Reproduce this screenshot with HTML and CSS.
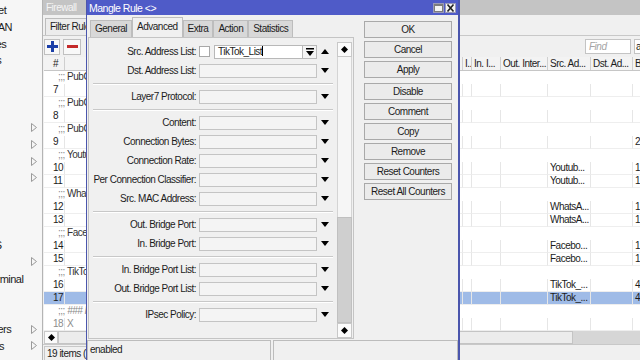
FILE: index.html
```html
<!doctype html>

<html>
    <head>
        <meta charset="utf-8">

        <title>Mangle Rule</title>

        <link rel="stylesheet" href="styles.css">

    </head>

    <body>

        <div id="ekran">

            <div id="menu">
                <div class="mi"><span class="mi-ad">Quick Set</span></div>
                <div class="mi"><span class="mi-ad">CAPsMAN</span></div>
                <div class="mi"><span class="mi-ad">Interfaces</span></div>
                <div class="mi"><span class="mi-ad">Wireless</span></div>
                <div class="mi"><span class="mi-ad">Bridge</span></div>
                <div class="mi"><span class="mi-ad">PPP</span></div>
                <div class="mi"><span class="mi-ad">Mesh</span></div>
                <div class="mi"><span class="mi-ad">IP</span><svg class="mi-ok" viewBox="0 0 6 9"><polygon points="0.5,0.5 5.5,4.5 0.5,8.5"/></svg></div>
                <div class="mi"><span class="mi-ad">MPLS</span><svg class="mi-ok" viewBox="0 0 6 9"><polygon points="0.5,0.5 5.5,4.5 0.5,8.5"/></svg></div>
                <div class="mi"><span class="mi-ad">Routing</span><svg class="mi-ok" viewBox="0 0 6 9"><polygon points="0.5,0.5 5.5,4.5 0.5,8.5"/></svg></div>
                <div class="mi"><span class="mi-ad">System</span><svg class="mi-ok" viewBox="0 0 6 9"><polygon points="0.5,0.5 5.5,4.5 0.5,8.5"/></svg></div>
                <div class="mi"><span class="mi-ad">Queues</span></div>
                <div class="mi"><span class="mi-ad">Files</span></div>
                <div class="mi"><span class="mi-ad">Log</span></div>
                <div class="mi"><span class="mi-ad">RADIUS</span></div>
                <div class="mi"><span class="mi-ad">Tools</span><svg class="mi-ok" viewBox="0 0 6 9"><polygon points="0.5,0.5 5.5,4.5 0.5,8.5"/></svg></div>
                <div class="mi"><span class="mi-ad">New Terminal</span></div>
                <div class="mi"><span class="mi-ad">Dot1X</span></div>
                <div class="mi"><span class="mi-ad">KVM</span></div>
                <div class="mi"><span class="mi-ad">Containers</span><svg class="mi-ok" viewBox="0 0 6 9"><polygon points="0.5,0.5 5.5,4.5 0.5,8.5"/></svg></div>
                <div class="mi"><span class="mi-ad">Windows</span><svg class="mi-ok" viewBox="0 0 6 9"><polygon points="0.5,0.5 5.5,4.5 0.5,8.5"/></svg></div>
            </div>

            <div id="firewall">
                <div class="fw-baslik">Firewall</div>
                <div class="fw-sekmeler">
                    <div class="fw-sekme">Filter Rules</div>
                </div>
                <div class="fw-arac">
                    <div class="arac-bt">
                        <svg width="11" height="11" viewBox="0 0 11 11"><rect x="4" y="0" width="3" height="11" fill="#1b3fa8"/><rect x="0" y="4" width="11" height="3" fill="#1b3fa8"/></svg>
                    </div>
                    <div class="arac-bt">
                        <svg width="11" height="11" viewBox="0 0 11 11"><rect x="0" y="4" width="11" height="3" fill="#c42a2a"/></svg>
                    </div>
                    <div class="find">Find</div>
                    <div class="secim">all</div>
                </div>

                <div class="tablo">
                    <div class="satir baslik">
                        <span class="c-no">#</span><span class="c-gz"></span><span class="c-i">I...</span><span class="c-in">In. I...</span><span class="c-out">Out. Inter...</span><span class="c-src">Src. Ad...</span><span class="c-dst">Dst. Ad...</span><span class="c-b">Bytes</span>
                    </div>
                    <div class="satir yorum"><span><i>;;;</i> PubG</span></div>
                    <div class="satir veri"><span class="c-no">7</span><span class="c-gz"></span><span class="c-i"></span><span class="c-in"></span><span class="c-out"></span><span class="c-src"></span><span class="c-dst"></span><span class="c-b"></span></div>
                    <div class="satir yorum"><span><i>;;;</i> PubG</span></div>
                    <div class="satir veri"><span class="c-no">8</span><span class="c-gz"></span><span class="c-i"></span><span class="c-in"></span><span class="c-out"></span><span class="c-src"></span><span class="c-dst"></span><span class="c-b"></span></div>
                    <div class="satir yorum"><span><i>;;;</i> PubG</span></div>
                    <div class="satir veri"><span class="c-no">9</span><span class="c-gz"></span><span class="c-i"></span><span class="c-in"></span><span class="c-out"></span><span class="c-src"></span><span class="c-dst"></span><span class="c-b">2</span></div>
                    <div class="satir yorum"><span><i>;;;</i> Youtube</span></div>
                    <div class="satir veri"><span class="c-no">10</span><span class="c-gz"></span><span class="c-i"></span><span class="c-in"></span><span class="c-out"></span><span class="c-src">Youtub...</span><span class="c-dst"></span><span class="c-b">1</span></div>
                    <div class="satir veri"><span class="c-no">11</span><span class="c-gz"></span><span class="c-i"></span><span class="c-in"></span><span class="c-out"></span><span class="c-src">Youtub...</span><span class="c-dst"></span><span class="c-b">1</span></div>
                    <div class="satir yorum"><span><i>;;;</i> WhatsApp</span></div>
                    <div class="satir veri"><span class="c-no">12</span><span class="c-gz"></span><span class="c-i"></span><span class="c-in"></span><span class="c-out"></span><span class="c-src">WhatsA...</span><span class="c-dst"></span><span class="c-b">1</span></div>
                    <div class="satir veri"><span class="c-no">13</span><span class="c-gz"></span><span class="c-i"></span><span class="c-in"></span><span class="c-out"></span><span class="c-src">WhatsA...</span><span class="c-dst"></span><span class="c-b">1</span></div>
                    <div class="satir yorum"><span><i>;;;</i> Facebook</span></div>
                    <div class="satir veri"><span class="c-no">14</span><span class="c-gz"></span><span class="c-i"></span><span class="c-in"></span><span class="c-out"></span><span class="c-src">Facebo...</span><span class="c-dst"></span><span class="c-b">1</span></div>
                    <div class="satir veri"><span class="c-no">15</span><span class="c-gz"></span><span class="c-i"></span><span class="c-in"></span><span class="c-out"></span><span class="c-src">Facebo...</span><span class="c-dst"></span><span class="c-b">1</span></div>
                    <div class="satir yorum"><span><i>;;;</i> TikTok</span></div>
                    <div class="satir veri"><span class="c-no">16</span><span class="c-gz"></span><span class="c-i"></span><span class="c-in"></span><span class="c-out"></span><span class="c-src">TikTok_...</span><span class="c-dst"></span><span class="c-b">4</span></div>
                    <div class="satir veri secili"><span class="c-no">17</span><span class="c-gz"></span><span class="c-i"></span><span class="c-in"></span><span class="c-out"></span><span class="c-src">TikTok_...</span><span class="c-dst"></span><span class="c-b">4</span></div>
                    <div class="satir yorum"><span><i>;;;</i> <em>### IPsec</em></span></div>
                    <div class="satir veri pasif"><span class="c-no">18</span><span class="c-gz">X</span><span class="c-i"></span><span class="c-in"></span><span class="c-out"></span><span class="c-src"></span><span class="c-dst"></span><span class="c-b"></span></div>
                </div>

                <div class="yatay">
                    <div class="ok-bt">
                        <svg width="7" height="7" viewBox="0 0 7 7"><polygon points="0,3.5 3.5,0 7,3.5 3.5,7"/></svg>
                    </div>
                    <div class="kaydirac"></div>
                </div>
                <div class="fw-durum">
                    <div class="durum-alan">19 items (1 selected)</div>
                </div>
            </div>

            <div id="pencere">
                <div class="p-baslik">
                    <span class="p-ad">Mangle Rule &lt;&gt;</span>
                    <div class="p-bt"><svg width="9" height="8" viewBox="0 0 9 8"><rect x="0.5" y="0.5" width="8" height="7" fill="none" stroke="#7c7c7c"/><rect x="0.5" y="0.5" width="8" height="1.5" fill="#7c7c7c"/></svg></div>
                    <div class="p-bt"><svg width="9" height="8" viewBox="0 0 9 8"><path d="M1.5 0.5 L7.5 7.5 M7.5 0.5 L1.5 7.5" stroke="#222" stroke-width="1.6"/></svg></div>
                </div>

                <div class="p-govde">
                    <div class="p-sol">
                        <div class="sekmeler">
                            <div class="sekme">General</div>
                            <div class="sekme aktif">Advanced</div>
                            <div class="sekme">Extra</div>
                            <div class="sekme">Action</div>
                            <div class="sekme">Statistics</div>
                        </div>

                        <div class="panel">
                            <div class="form">
                                <div class="f-satir">
                                    <label>Src. Address List:</label>
                                    <div class="kutu"></div>
                                    <div class="girdi dolu">TikTok_List<span class="imlec"></span></div>
                                    <div class="acilir-bt"><svg width="8" height="8" viewBox="0 0 8 8"><rect x="0" y="0" width="8" height="1.5"/><polygon points="0,3 8,3 4,8"/></svg></div>
                                    <svg class="ok" viewBox="0 0 8 5"><polygon points="0,5 8,5 4,0"/></svg>
                                </div>
                                <div class="f-satir">
                                    <label>Dst. Address List:</label>
                                    <div class="girdi"></div>
                                    <svg class="ok" viewBox="0 0 8 5"><polygon points="0,0 8,0 4,5"/></svg>
                                </div>
                                <div class="ayirac"></div>
                                <div class="f-satir">
                                    <label>Layer7 Protocol:</label>
                                    <div class="girdi"></div>
                                    <svg class="ok" viewBox="0 0 8 5"><polygon points="0,0 8,0 4,5"/></svg>
                                </div>
                                <div class="ayirac"></div>
                                <div class="f-satir">
                                    <label>Content:</label>
                                    <div class="girdi"></div>
                                    <svg class="ok" viewBox="0 0 8 5"><polygon points="0,0 8,0 4,5"/></svg>
                                </div>
                                <div class="f-satir">
                                    <label>Connection Bytes:</label>
                                    <div class="girdi"></div>
                                    <svg class="ok" viewBox="0 0 8 5"><polygon points="0,0 8,0 4,5"/></svg>
                                </div>
                                <div class="f-satir">
                                    <label>Connection Rate:</label>
                                    <div class="girdi"></div>
                                    <svg class="ok" viewBox="0 0 8 5"><polygon points="0,0 8,0 4,5"/></svg>
                                </div>
                                <div class="f-satir">
                                    <label>Per Connection Classifier:</label>
                                    <div class="girdi"></div>
                                    <svg class="ok" viewBox="0 0 8 5"><polygon points="0,0 8,0 4,5"/></svg>
                                </div>
                                <div class="f-satir">
                                    <label>Src. MAC Address:</label>
                                    <div class="girdi"></div>
                                    <svg class="ok" viewBox="0 0 8 5"><polygon points="0,0 8,0 4,5"/></svg>
                                </div>
                                <div class="ayirac"></div>
                                <div class="f-satir">
                                    <label>Out. Bridge Port:</label>
                                    <div class="girdi"></div>
                                    <svg class="ok" viewBox="0 0 8 5"><polygon points="0,0 8,0 4,5"/></svg>
                                </div>
                                <div class="f-satir">
                                    <label>In. Bridge Port:</label>
                                    <div class="girdi"></div>
                                    <svg class="ok" viewBox="0 0 8 5"><polygon points="0,0 8,0 4,5"/></svg>
                                </div>
                                <div class="ayirac"></div>
                                <div class="f-satir">
                                    <label>In. Bridge Port List:</label>
                                    <div class="girdi"></div>
                                    <svg class="ok" viewBox="0 0 8 5"><polygon points="0,0 8,0 4,5"/></svg>
                                </div>
                                <div class="f-satir">
                                    <label>Out. Bridge Port List:</label>
                                    <div class="girdi"></div>
                                    <svg class="ok" viewBox="0 0 8 5"><polygon points="0,0 8,0 4,5"/></svg>
                                </div>
                                <div class="ayirac"></div>
                                <div class="f-satir">
                                    <label>IPsec Policy:</label>
                                    <div class="girdi"></div>
                                    <svg class="ok" viewBox="0 0 8 5"><polygon points="0,0 8,0 4,5"/></svg>
                                </div>
                            </div>

                            <div class="dikey">
                                <div class="d-bt">
                                    <svg width="7" height="7" viewBox="0 0 7 7"><polygon points="3.5,0 7,3.5 3.5,7 0,3.5"/></svg>
                                </div>
                                <div class="d-iz"></div>
                                <div class="d-tutamac"></div>
                                <div class="d-bt">
                                    <svg width="7" height="7" viewBox="0 0 7 7"><polygon points="3.5,0 7,3.5 3.5,7 0,3.5"/></svg>
                                </div>
                            </div>
                        </div>
                    </div>

                    <div class="p-sag">
                        <button class="dugme">OK</button>
                        <button class="dugme">Cancel</button>
                        <button class="dugme ara">Apply</button>
                        <button class="dugme">Disable</button>
                        <button class="dugme">Comment</button>
                        <button class="dugme">Copy</button>
                        <button class="dugme">Remove</button>
                        <button class="dugme">Reset Counters</button>
                        <button class="dugme">Reset All Counters</button>
                    </div>
                </div>

                <div class="p-durum">
                    <div class="p-alan uzun">enabled</div>
                    <div class="p-alan"></div>
                </div>
            </div>

        </div>

    </body>
</html>
```

FILE: styles.css
```css
*{
    margin: 0px;
    padding: 0px;
    box-sizing: border-box;
}
body{
    width: 640px;
    height: 360px;
    overflow: hidden;
    font-family: "Liberation Sans", Arial, sans-serif;
    font-size: 10px;
    letter-spacing: -0.5px;
    color: #1c1c1c;
    background-color: #f0f0f0;
}
#ekran{
    position: relative;
    display: flex;
    width: 640px;
    height: 360px;
    overflow: hidden;
}

/* sol menu */
#menu{
    width: 43px;
    flex-shrink: 0;
    padding-top: 1.6px;
    overflow: hidden;
    font-size: 11px;
    background-color: #f6f6f6;
    border-right: 1px solid #b4b4b4;
}
.mi{
    display: flex;
    align-items: center;
    height: 16.8px;
}
.mi-ad{
    flex: 1;
    margin-left: -37px;
    white-space: nowrap;
    overflow: hidden;
}
.mi-ok{
    width: 6px;
    height: 9px;
    margin-right: 5px;
    fill: none;
    stroke: #9a9a9a;
}

/* firewall penceresi */
#firewall{
    width: 597px;
    flex-shrink: 0;
    display: flex;
    flex-direction: column;
    overflow: hidden;
    background-color: #f0f0f0;
}
.fw-baslik{
    height: 15px;
    line-height: 15px;
    padding-left: 3px;
    color: #f4f4f4;
    background-color: #c4c4c4;
}
.fw-sekmeler{
    height: 21px;
    display: flex;
    align-items: flex-end;
    padding-left: 2px;
    border-bottom: 1px solid #c8c8c8;
}
.fw-sekme{
    height: 17px;
    line-height: 16px;
    padding: 0px 4px;
    white-space: nowrap;
    border: 1px solid #bcbcbc;
    border-bottom: none;
    background-color: #ececec;
}
.fw-arac{
    height: 21px;
    display: flex;
    align-items: center;
    padding-left: 1px;
}
.arac-bt{
    width: 16px;
    height: 16px;
    margin-right: 3px;
    display: flex;
    justify-content: center;
    align-items: center;
    border: 1px solid #c0c0c0;
    background-color: #f8f8f8;
}
.arac-bt + .arac-bt{
    width: 18px;
}
.find{
    width: 46px;
    height: 15px;
    margin-left: auto;
    padding-left: 3px;
    line-height: 13px;
    font-style: italic;
    color: #a4a4a4;
    background-color: #ffffff;
    border: 1px solid #c4c4c4;
}
.secim{
    width: 6px;
    height: 15px;
    margin-left: 3px;
    padding-left: 1px;
    line-height: 13px;
    overflow: hidden;
    background-color: #ffffff;
    border: 1px solid #c4c4c4;
    border-right: none;
}

/* tablo */
.tablo{
    height: 274px;
    margin-left: 1px;
    overflow: hidden;
    background-color: #ffffff;
}
.satir{
    display: flex;
    height: 13px;
    line-height: 12px;
    white-space: nowrap;
}
.satir span{
    flex-shrink: 0;
    overflow: hidden;
    padding-left: 2px;
}
.baslik{
    height: 14px;
    line-height: 13px;
    background-color: #f3f3f3;
    border-bottom: 1px solid #c6c6c6;
}
.baslik span{
    border-right: 1px solid #cfcfcf;
}
.veri span{
    border-right: 1px solid #e6e6e6;
    border-bottom: 1px solid #eeeeee;
}
.c-no{ width: 21px; }
.satir .c-no{ padding-left: 9px; }
.c-gz{ width: 398px; }
.c-i{ width: 9px; }
.c-in{ width: 29px; }
.c-out{ width: 47px; }
.c-src{ width: 43px; }
.c-dst{ width: 42px; }
.c-b{ width: 40px; }
.satir.yorum span{
    padding-left: 14px;
    color: #333333;
}
.yorum i{
    font-style: normal;
    color: #8a8a8a;
}
.yorum em{
    color: #8a8a8a;
}
.secili{
    background-color: #9fbbe7;
}
.pasif{
    color: #8c8c8c;
}

.yatay{
    height: 13px;
    display: flex;
    margin-left: 1px;
    background-color: #d6d6d6;
}
.ok-bt{
    width: 14px;
    display: flex;
    justify-content: center;
    align-items: center;
    background-color: #fbfbfb;
    border: 1px solid #c8c8c8;
}
.kaydirac{
    width: 515px;
    background-color: #ececec;
    border: 1px solid #c4c4c4;
}
.fw-durum{
    height: 16px;
    padding: 1px 0px 0px 1px;
    border-top: 1px solid #c8c8c8;
}
.durum-alan{
    width: 43px;
    height: 15px;
    padding-left: 2px;
    line-height: 14px;
    white-space: nowrap;
    overflow: hidden;
    border: 1px solid #c8c8c8;
    border-bottom: none;
    border-right: none;
}

/* mangle rule penceresi */
#pencere{
    position: absolute;
    left: 86px;
    top: 0px;
    width: 374px;
    height: 364px;
    background-color: #f0f0f0;
    border: 1px solid #4b56ad;
    border-top: none;
    border-right-width: 2px;
}
.p-baslik{
    height: 15px;
    display: flex;
    align-items: center;
    padding-left: 2px;
    padding-right: 2px;
    font-size: 10.5px;
    color: #ffffff;
    background-color: #4f5bc8;
}
.p-ad{
    flex: 1;
}
.p-bt{
    width: 11px;
    height: 10px;
    margin-left: 1px;
    display: flex;
    justify-content: center;
    align-items: center;
    background-color: #f4f4f4;
    border: 1px solid #9a9ab8;
}
.p-govde{
    display: flex;
    align-items: flex-start;
}
.p-sol{
    width: 266px;
    margin-left: 1px;
    padding-top: 2px;
}
.sekmeler{
    height: 20px;
    display: flex;
    align-items: flex-end;
    padding-left: 2px;
}
.sekme{
    height: 17px;
    line-height: 16px;
    padding: 0px 4px;
    white-space: nowrap;
    background-color: #d8d8d8;
    border: 1px solid #bdbdbd;
    border-bottom: none;
}
.sekme.aktif{
    height: 20px;
    line-height: 17px;
    background-color: #f0f0f0;
}
.panel{
    height: 302px;
    display: flex;
    border: 1px solid #c4c4c4;
}
.form{
    width: 248px;
    padding-top: 4px;
}
.f-satir{
    height: 19px;
    display: flex;
    align-items: center;
}
.f-satir label{
    width: 107px;
    text-align: right;
    white-space: nowrap;
}
.girdi{
    width: 118px;
    height: 14px;
    margin-left: 3px;
    background-color: #f4f4f4;
    border: 1px solid #c4c4c4;
}
.kutu{
    width: 11px;
    height: 11px;
    margin-left: 3px;
    background-color: #ffffff;
    border: 1px solid #a8a8a8;
}
.girdi.dolu{
    width: 89px;
    margin-left: 4px;
    padding-left: 3px;
    line-height: 12px;
    background-color: #ffffff;
    border-color: #b8b8b8;
}
.imlec{
    display: inline-block;
    width: 1px;
    height: 10px;
    vertical-align: -1px;
    background-color: #000000;
}
.acilir-bt{
    width: 14px;
    height: 14px;
    display: flex;
    justify-content: center;
    align-items: center;
    background-color: #f4f4f4;
    border: 1px solid #b8b8b8;
    border-left: none;
}
.ok{
    width: 8px;
    height: 5px;
    margin-left: 4px;
}
.ayirac{
    margin: 3px 4px 2px 4px;
    height: 2px;
    border-top: 1px solid #c8c8c8;
    border-bottom: 1px solid #ffffff;
}
.dikey{
    width: 15px;
    display: flex;
    flex-direction: column;
    padding-top: 4px;
}
.d-bt{
    height: 15px;
    display: flex;
    justify-content: center;
    align-items: center;
    background-color: #fbfbfb;
    border: 1px solid #c8c8c8;
}
.d-iz{
    flex: 1;
    background-color: #f6f6f6;
    border-left: 1px solid #d4d4d4;
    border-right: 1px solid #d4d4d4;
}
.d-tutamac{
    height: 106px;
    background-color: #cfcfcf;
    border: 1px solid #c0c0c0;
}
.p-sag{
    width: 88px;
    margin-left: 10px;
    padding-top: 6px;
    display: flex;
    flex-direction: column;
}
.dugme{
    height: 17px;
    margin-bottom: 3px;
    white-space: nowrap;
    font-family: inherit;
    font-size: 10px;
    letter-spacing: inherit;
    color: #1c1c1c;
    background-color: #ebebeb;
    border: 1px solid #a9a9a9;
}
.dugme.ara{
    margin-bottom: 5px;
}
.p-durum{
    display: flex;
    padding-top: 1px;
}
.p-alan{
    flex: 1;
    height: 22px;
    padding-left: 2px;
    line-height: 17px;
    border: 1px solid #bcbcbc;
}
.p-alan.uzun{
    flex: none;
    width: 184px;
    margin-right: 2px;
}
```
